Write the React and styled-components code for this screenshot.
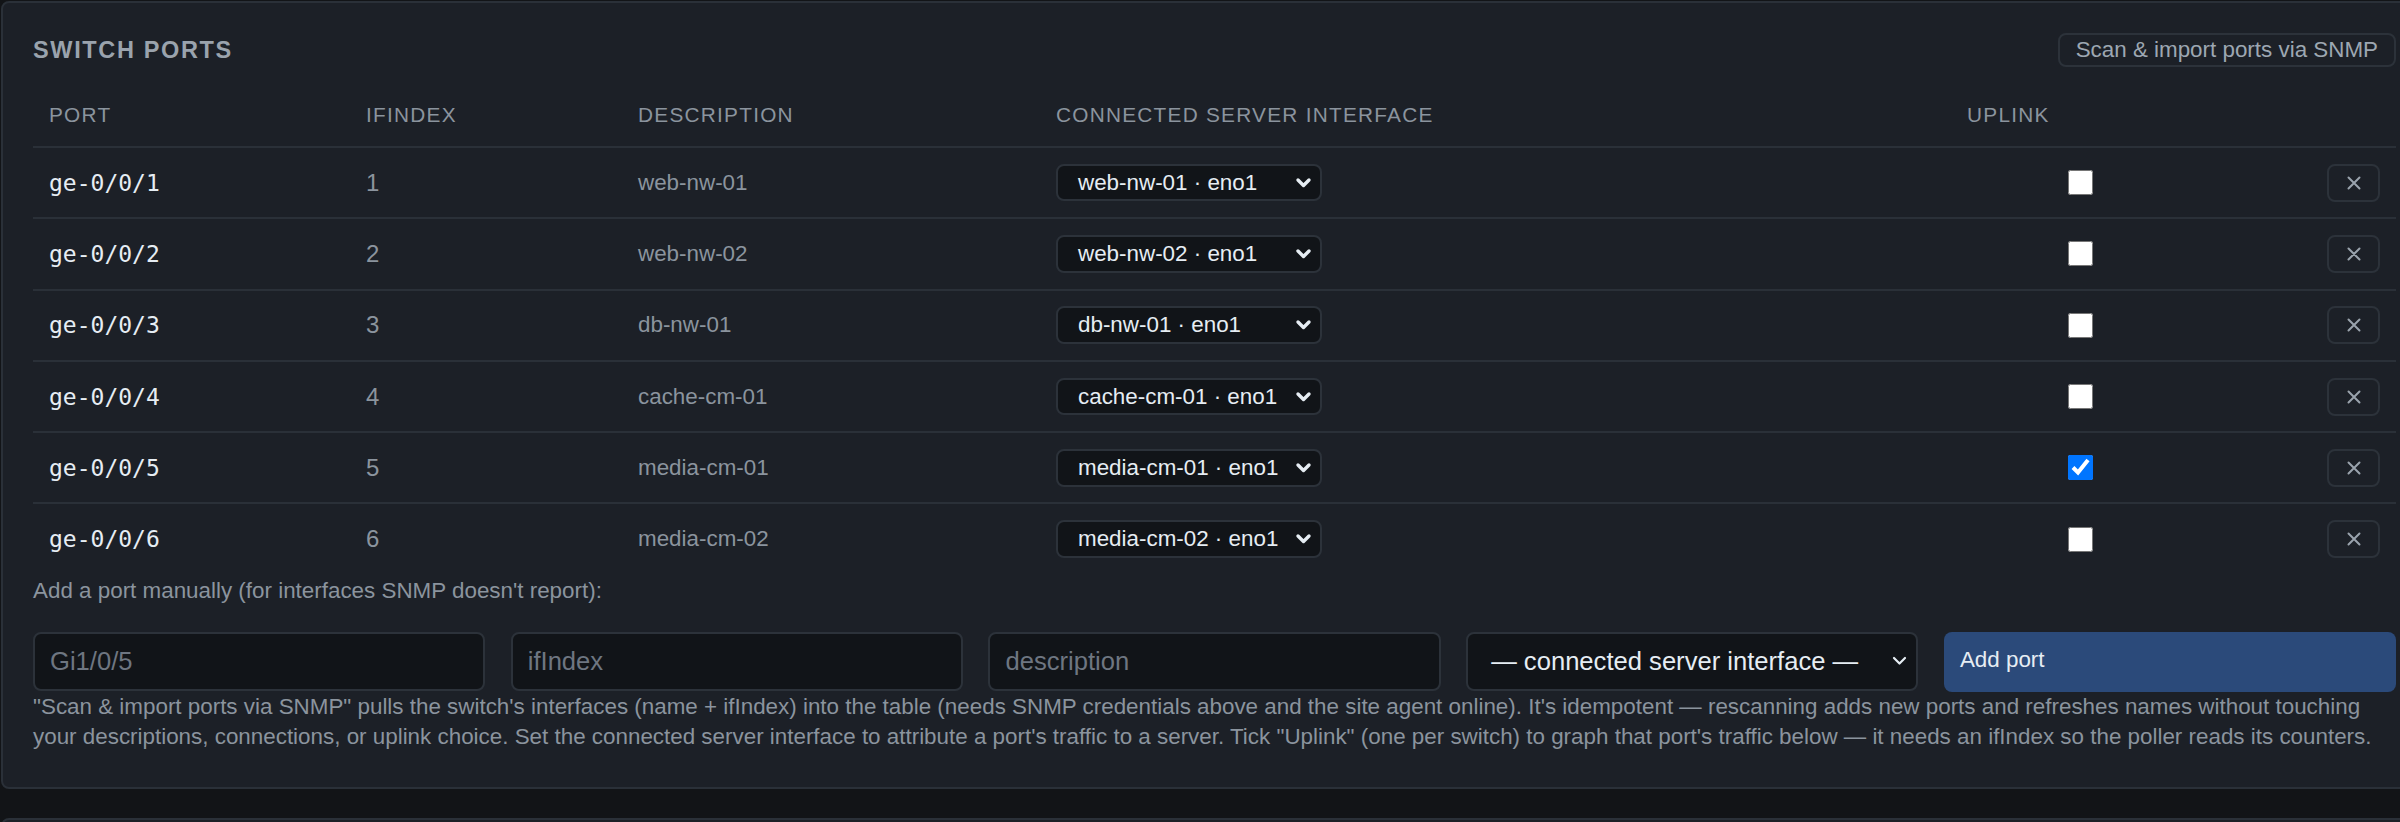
import React from "react";
import styled, { createGlobalStyle } from "styled-components";

const GlobalStyle = createGlobalStyle`
  html, body {
    margin: 0;
    background: #121417;
    overflow: hidden;
  }
  body {
    font-family: "Liberation Sans", Arial, sans-serif;
    color: #e6edf3;
  }
  * { box-sizing: border-box; }
`;

const ports = [
  { name: "ge-0/0/1", ifIndex: 1, desc: "web-nw-01", iface: "web-nw-01 · eno1", uplink: false },
  { name: "ge-0/0/2", ifIndex: 2, desc: "web-nw-02", iface: "web-nw-02 · eno1", uplink: false },
  { name: "ge-0/0/3", ifIndex: 3, desc: "db-nw-01", iface: "db-nw-01 · eno1", uplink: false },
  { name: "ge-0/0/4", ifIndex: 4, desc: "cache-cm-01", iface: "cache-cm-01 · eno1", uplink: false },
  { name: "ge-0/0/5", ifIndex: 5, desc: "media-cm-01", iface: "media-cm-01 · eno1", uplink: true },
  { name: "ge-0/0/6", ifIndex: 6, desc: "media-cm-02", iface: "media-cm-02 · eno1", uplink: false },
];

const Page = styled.div`
  display: flex;
  flex-direction: column;
  gap: 29px;
  width: 2428px;
  padding: 1px 0 0 1px;
`;

const Card = styled.section`
  background: #1c2027;
  border: 2px solid #2a3038;
  border-radius: 8px;
  padding: 30px 30px 34px;
  min-height: ${(p) => (p.$stub ? "200px" : "auto")};
`;

const CardHead = styled.div`
  display: flex;
  align-items: center;
  justify-content: space-between;
  height: 34px;
  margin-bottom: 20px;
`;

const Title = styled.h2`
  margin: 0;
  font-size: 23.5px;
  font-weight: 700;
  letter-spacing: 0.07em;
  text-transform: uppercase;
  color: #9aa3ad;
`;

const GhostButton = styled.button`
  height: 34px;
  padding: 0 16px;
  background: transparent;
  border: 2px solid #2c323a;
  border-radius: 8px;
  font-family: inherit;
  font-size: 22.4px;
  color: #9da7b2;
`;

const columns = "317px 272px 418px 911px 258px 1fr";

const HeadRow = styled.div`
  display: grid;
  grid-template-columns: ${columns};
  align-items: center;
  height: 61px;
  padding-bottom: 4px;
  border-bottom: 2px solid #2a3038;
`;

const HeadCell = styled.div`
  padding: 0 16px;
  font-size: 20.8px;
  letter-spacing: 0.06em;
  text-transform: uppercase;
  color: #8b949e;
`;

const Row = styled.div`
  display: grid;
  grid-template-columns: ${columns};
  align-items: center;
  height: 71.3px;
  border-bottom: 2px solid ${(p) => (p.$last ? "transparent" : "#2a3038")};
`;

const Cell = styled.div`
  padding: 0 16px;
  display: flex;
  justify-content: ${(p) => p.$justify || "flex-start"};
  font-size: ${(p) => p.$size || "22.4px"};
  color: ${(p) => (p.$muted ? "#8b949e" : "#e6edf3")};
`;

const PortName = styled.span`
  font-family: "DejaVu Sans Mono", monospace;
  font-size: 23px;
  color: #e6edf3;
`;

const SelectBox = styled.div`
  display: flex;
  align-items: center;
  justify-content: space-between;
  width: ${(p) => (p.$wide ? "100%" : "266px")};
  height: ${(p) => (p.$wide ? "59.5px" : "37.5px")};
  padding: ${(p) => (p.$wide ? "0 8px 0 23px" : "0 8px 0 20px")};
  background: #111418;
  border: 2px solid #2c323a;
  border-radius: 8px;
  font-size: ${(p) => (p.$wide ? "25.6px" : "22.4px")};
  color: #e6edf3;
  white-space: nowrap;
`;

const Check = styled.input`
  width: 25px;
  height: 25px;
  margin: 0;
`;

const RemoveButton = styled.button`
  display: flex;
  align-items: center;
  justify-content: center;
  width: 53px;
  height: 38px;
  padding: 0;
  background: transparent;
  border: 2px solid #2c323a;
  border-radius: 8px;
`;

const Hint = styled.p`
  margin: 0 0 25px;
  font-size: 22.4px;
  line-height: 1.38;
  color: #8b949e;
`;

const AddForm = styled.div`
  display: grid;
  grid-template-columns: repeat(5, 1fr);
  gap: 25.6px;
`;

const Field = styled.input`
  height: 59.5px;
  padding: 0 15px;
  background: #111418;
  border: 2px solid #2c323a;
  border-radius: 8px;
  font-family: inherit;
  font-size: 25.6px;
  color: #e6edf3;
  outline: none;
  &::placeholder { color: #6e7681; }
`;

const PrimaryButton = styled.button`
  height: 60px;
  padding: 0 16px 3px;
  text-align: left;
  background: #2b4a7a;
  border: none;
  border-radius: 8px;
  font-family: inherit;
  font-size: 22.4px;
  color: #e6edf3;
`;

const Note = styled.p`
  margin: 0;
  font-size: 22.4px;
  line-height: 1.37;
  color: #8b949e;
`;

const Chevron = ({ bold }) => (
  <svg width="17" height="12" viewBox="0 0 17 12" fill="none">
    <path
      d="M3 3 L8.5 8.5 L14 3"
      stroke="#e6edf3"
      strokeWidth={bold ? 3.4 : 2.2}
      strokeLinecap="round"
      strokeLinejoin="round"
    />
  </svg>
);

const CloseIcon = () => (
  <svg width="14" height="14" viewBox="0 0 14 14" fill="none">
    <path d="M1.5 1.5 L12.5 12.5 M12.5 1.5 L1.5 12.5" stroke="#9aa3ad" strokeWidth="2" strokeLinecap="round" />
  </svg>
);

export default function App() {
  return (
    <>
      <GlobalStyle />
      <Page>
        <Card>
          <CardHead>
            <Title>Switch ports</Title>
            <GhostButton>Scan &amp; import ports via SNMP</GhostButton>
          </CardHead>

          <div>
            <HeadRow>
              <HeadCell>Port</HeadCell>
              <HeadCell>ifIndex</HeadCell>
              <HeadCell>Description</HeadCell>
              <HeadCell>Connected server interface</HeadCell>
              <HeadCell>Uplink</HeadCell>
              <HeadCell />
            </HeadRow>
            {ports.map((p, i) => (
              <Row key={p.name} $last={i === ports.length - 1}>
                <Cell>
                  <PortName>{p.name}</PortName>
                </Cell>
                <Cell $muted $size="24px">{p.ifIndex}</Cell>
                <Cell $muted>{p.desc}</Cell>
                <Cell>
                  <SelectBox>
                    <span>{p.iface}</span>
                    <Chevron bold />
                  </SelectBox>
                </Cell>
                <Cell $justify="center">
                  <Check type="checkbox" defaultChecked={p.uplink} />
                </Cell>
                <Cell $justify="flex-end">
                  <RemoveButton aria-label="Remove port">
                    <CloseIcon />
                  </RemoveButton>
                </Cell>
              </Row>
            ))}
          </div>

          <Hint>Add a port manually (for interfaces SNMP doesn't report):</Hint>
          <AddForm>
            <Field placeholder="Gi1/0/5" />
            <Field placeholder="ifIndex" />
            <Field placeholder="description" />
            <SelectBox $wide>
              <span>— connected server interface —</span>
              <Chevron />
            </SelectBox>
            <PrimaryButton>Add port</PrimaryButton>
          </AddForm>
          <Note>
            "Scan &amp; import ports via SNMP" pulls the switch's interfaces (name + ifIndex) into the
            table (needs SNMP credentials above and the site agent online). It's idempotent —
            rescanning adds new ports and refreshes names without touching your descriptions,
            connections, or uplink choice. Set the connected server interface to attribute a port's
            traffic to a server. Tick "Uplink" (one per switch) to graph that port's traffic below —
            it needs an ifIndex so the poller reads its counters.
          </Note>
        </Card>
        <Card $stub />
      </Page>
    </>
  );
}
